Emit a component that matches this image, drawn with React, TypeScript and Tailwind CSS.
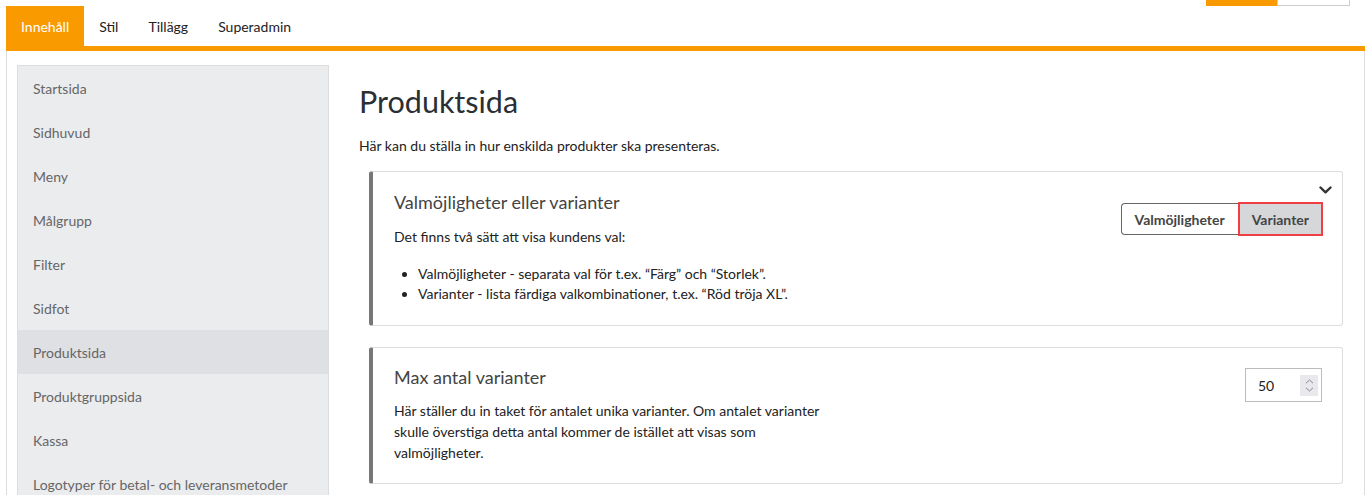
import React from "react";

const tabs = ["Innehåll", "Stil", "Tillägg", "Superadmin"];
const menu = [
  "Startsida",
  "Sidhuvud",
  "Meny",
  "Målgrupp",
  "Filter",
  "Sidfot",
  "Produktsida",
  "Produktgruppsida",
  "Kassa",
  "Logotyper för betal- och leveransmetoder",
];

const Chevron = () => (
  <svg width="13" height="8" viewBox="0 0 13 8" fill="none">
    <polyline points="1.5,1.5 6.5,6.3 11.5,1.5" stroke="#333" strokeWidth="2.4" strokeLinecap="round" strokeLinejoin="round" />
  </svg>
);

const Spinner = () => (
  <div className="flex h-[21px] w-[18px] flex-col items-center justify-center gap-[3px] bg-[#e9e9ed]">
    <svg width="9" height="5" viewBox="0 0 9 5" fill="none">
      <polyline points="1,4.2 4.5,1 8,4.2" stroke="#888" strokeWidth="1" />
    </svg>
    <svg width="9" height="5" viewBox="0 0 9 5" fill="none">
      <polyline points="1,0.8 4.5,4 8,0.8" stroke="#888" strokeWidth="1" />
    </svg>
  </div>
);

const App = () => {
  return (
    <div className="h-[495px] overflow-hidden bg-white px-[6px] font-['Lato',sans-serif] text-[14px] text-[#222]">
      <div className="flex h-[6px] justify-end pr-[15px]">
        <div className="w-[71px] bg-[#f89a00]" />
        <div className="w-[73px] border border-t-0 border-[#ccc]" />
      </div>
      <div className="flex h-[40px]">
        {tabs.map((t, i) => (
          <div
            key={t}
            className={
              i === 0
                ? "flex items-center bg-[#f89a00] px-[15px] text-white"
                : "flex items-center px-[15px] text-[#222]"
            }
          >
            {t}
          </div>
        ))}
      </div>
      <div className="h-[5px] bg-[#f89a00]" />
      <div className="flex border-x border-[#ddd] pl-[10px] pr-[21px]">
        <div className="mt-[14px] w-[312px] shrink-0 border border-[#ddd] bg-[#ebecee]">
          {menu.map((m) => (
            <div
              key={m}
              className={
                m === "Produktsida"
                  ? "flex h-[44px] items-center bg-[#dfe0e3] pl-[15px] text-[#666]"
                  : "flex h-[44px] items-center pl-[15px] text-[#666]"
              }
            >
              {m}
            </div>
          ))}
        </div>
        <div className="flex-1 pl-[30px] pt-[34px]">
          <h1 className="text-[30.5px] leading-[33px] text-[#2b2f33]">Produktsida</h1>
          <p className="mt-[18px] leading-[20px]">
            Här kan du ställa in hur enskilda produkter ska presenteras.
          </p>
          <div className="relative ml-[10px] mt-[15px] flex justify-between rounded-[3px] border border-l-4 border-[#ddd] border-l-[#777] pb-[21px] pl-[21px] pr-[19px] pt-[19px]">
            <div className="absolute right-[10px] top-[14px]">
              <Chevron />
            </div>
            <div>
              <h2 className="text-[18px] leading-[22px] text-[#444]">Valmöjligheter eller varianter</h2>
              <p className="mt-[14px] leading-[20px]">Det finns två sätt att visa kundens val:</p>
              <ul className="mt-[17px] list-disc pl-[24px] leading-[20px]">
                <li>Valmöjligheter - separata val för t.ex. “Färg” och “Storlek”.</li>
                <li>Varianter - lista färdiga valkombinationer, t.ex. “Röd tröja XL”.</li>
              </ul>
            </div>
            <div className="mt-[11px] flex h-[34px] items-stretch self-start">
              <div className="my-[1px] flex items-center rounded-l-[4px] border border-r-0 border-[#666] px-[13px] font-bold text-[#444]">
                Valmöjligheter
              </div>
              <div className="flex items-center border-2 border-[#ef3f45] bg-[#d6d7d9] px-[12px] font-bold text-[#444]">
                Varianter
              </div>
            </div>
          </div>
          <div className="ml-[10px] mt-[21px] flex justify-between rounded-[3px] border border-l-4 border-[#ddd] border-l-[#777] pb-[20px] pl-[21px] pr-[20px] pt-[18px]">
            <div>
              <h2 className="text-[18px] leading-[22px] text-[#444]">Max antal varianter</h2>
              <p className="mt-[12px] max-w-[440px] leading-[21px]">
                Här ställer du in taket för antalet unika varianter. Om antalet varianter skulle överstiga detta antal kommer de istället att visas som valmöjligheter.
              </p>
            </div>
            <div className="mt-[2px] flex h-[34px] w-[77px] items-center justify-between self-start border border-[#bbb] pl-[12px] pr-[3px]">
              <span>50</span>
              <Spinner />
            </div>
          </div>
        </div>
      </div>
    </div>
  );
};

export default App;
